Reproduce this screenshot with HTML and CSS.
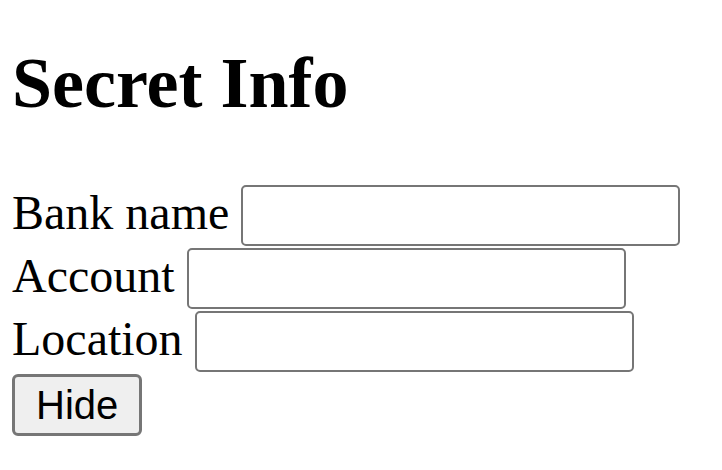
FILE: index.html
```html
<!DOCTYPE html>
<html>
<head>
<meta charset="utf-8">
<title>Secret Info</title>
<link rel="stylesheet" href="styles.css">
</head>
<body>
<h1 class="title">Secret Info</h1>
<form class="form">
  <div class="row"><label>Bank name <input class="field" type="text"></label></div>
  <div class="row"><label>Account <input class="field" type="text"></label></div>
  <div class="row"><label>Location <input class="field" type="text"></label></div>
  <div class="row"><button class="btn" type="button">Hide</button></div>
</form>
</body>
</html>
```
FILE: styles.css
```css
html, body {
  margin: 0;
  background: #fff;
}
body {
  padding: 0 12px;
  font-family: "Liberation Serif", "Times New Roman", serif;
  font-size: 48px;
  color: #000;
}
.title {
  font-size: 72px;
  font-weight: bold;
  margin: 42px 0 59px;
  line-height: normal;
}
.form {
  margin: 0;
}
.row {
  line-height: normal;
}
.field {
  box-sizing: border-box;
  width: 439px;
  height: 61px;
  margin: 1px 0;
  padding: 0 6px;
  border: 2px solid #767676;
  border-radius: 5px;
  background: #fff;
  font-family: "Liberation Sans", Arial, sans-serif;
  font-size: 40px;
  vertical-align: baseline;
}
.btn {
  box-sizing: border-box;
  height: 62px;
  margin: 1px 0;
  padding: 0 21px;
  border: 3px solid #767676;
  border-radius: 6px;
  background: #efefef;
  color: #000;
  font-family: "Liberation Sans", Arial, sans-serif;
  font-size: 40px;
}
```
